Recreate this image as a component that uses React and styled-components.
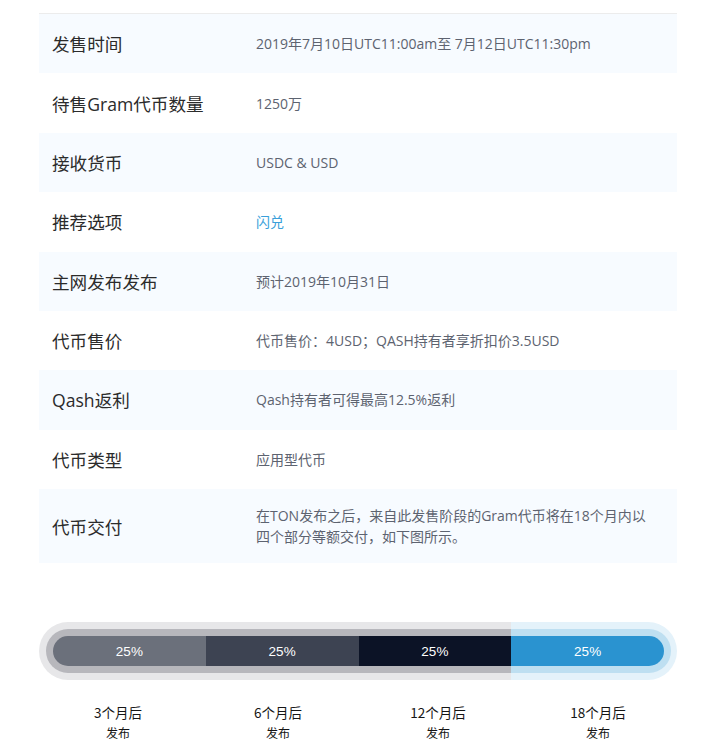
import React from "react";
import styled, { createGlobalStyle } from "styled-components";

const Global = createGlobalStyle`
  * { box-sizing: border-box; }
  body {
    margin: 0;
    background: #ffffff;
    font-family: "Open Sans", "Noto Sans CJK SC", sans-serif;
  }
`;

const Page = styled.div`
  padding: 13px 30px 0 39px;
`;

const Table = styled.div`
  border-top: 1px solid #ececec;
  display: flex;
  flex-direction: column;
`;

const Row = styled.div`
  display: grid;
  grid-template-columns: 217px 1fr;
  align-items: center;
  min-height: 59.375px;
  padding: ${(p) => (p.$tall ? "16px 0" : "0")};
  background: ${(p) => (p.$shade ? "#f7fbff" : "#ffffff")};
`;

const Label = styled.div`
  padding-left: 13px;
  font-size: 17.6px;
  color: #2b2b2b;
`;

const Value = styled.div`
  padding-right: 26px;
  font-size: 14px;
  line-height: 21px;
  color: ${(p) => (p.$link ? "#3a9fda" : "#5d6370")};
`;

const Schedule = styled.div`
  margin-top: 59px;
`;

const Track = styled.div`
  display: flex;
`;

const Stage = styled.div`
  flex: 1 1 ${(p) => (p.$first ? "14px" : p.$last ? "13px" : "0px")};
  padding: 7px ${(p) => (p.$last ? "6px" : "0")} 7px ${(p) => (p.$first ? "7px" : "0")};
  background: ${(p) => (p.$blue ? "#e4f2fa" : "#e7e7e9")};
  border-radius: ${(p) => (p.$first ? "30px 0 0 30px" : p.$last ? "0 30px 30px 0" : "0")};
`;

const Ring = styled.div`
  padding: 7px ${(p) => (p.$last ? "7px" : "0")} 7px ${(p) => (p.$first ? "7px" : "0")};
  background: ${(p) => (p.$blue ? "#bedff1" : "#b7b7bc")};
  border-radius: ${(p) => (p.$first ? "23px 0 0 23px" : p.$last ? "0 23px 23px 0" : "0")};
`;

const Segment = styled.div`
  height: 30px;
  display: flex;
  align-items: center;
  justify-content: center;
  background: ${(p) => p.$color};
  color: #ffffff;
  font-family: "Liberation Sans", Arial, sans-serif;
  font-size: 13.5px;
  border-radius: ${(p) => (p.$first ? "15px 0 0 15px" : p.$last ? "0 15px 15px 0" : "0")};
`;

const Captions = styled.div`
  display: grid;
  grid-template-columns: repeat(4, 1fr);
  margin-top: 21px;
  margin-right: -1px;
  margin-left: -1px;
`;

const Caption = styled.div`
  text-align: center;
  color: #151515;
  font-family: "Noto Sans CJK SC", sans-serif;
`;

const CaptionMain = styled.div`
  font-size: 13.5px;
  line-height: 22px;
`;

const CaptionSub = styled.div`
  font-size: 12px;
  line-height: 20px;
`;

const rows = [
  { label: "发售时间", value: "2019年7月10日UTC11:00am至 7月12日UTC11:30pm" },
  { label: "待售Gram代币数量", value: "1250万" },
  { label: "接收货币", value: "USDC & USD" },
  { label: "推荐选项", value: "闪兑", link: true },
  { label: "主网发布发布", value: "预计2019年10月31日" },
  { label: "代币售价", value: "代币售价：4USD；QASH持有者享折扣价3.5USD" },
  { label: "Qash返利", value: "Qash持有者可得最高12.5%返利" },
  { label: "代币类型", value: "应用型代币" },
  {
    label: "代币交付",
    value: "在TON发布之后，来自此发售阶段的Gram代币将在18个月内以四个部分等额交付，如下图所示。",
    tall: true,
  },
];

const stages = [
  { color: "#6b707b", when: "3个月后" },
  { color: "#3d4352", when: "6个月后" },
  { color: "#0c1326", when: "12个月后" },
  { color: "#2a93d0", when: "18个月后", blue: true },
];

export default function App() {
  return (
    <>
      <Global />
      <Page>
        <Table>
          {rows.map((r, i) => (
            <Row key={r.label} $shade={i % 2 === 0} $tall={r.tall}>
              <Label>{r.label}</Label>
              <Value $link={r.link}>{r.value}</Value>
            </Row>
          ))}
        </Table>
        <Schedule>
          <Track>
            {stages.map((s, i) => {
              const first = i === 0;
              const last = i === stages.length - 1;
              return (
                <Stage key={s.when} $first={first} $last={last} $blue={s.blue}>
                  <Ring $first={first} $last={last} $blue={s.blue}>
                    <Segment $first={first} $last={last} $color={s.color}>
                      25%
                    </Segment>
                  </Ring>
                </Stage>
              );
            })}
          </Track>
          <Captions>
            {stages.map((s) => (
              <Caption key={s.when}>
                <CaptionMain>{s.when}</CaptionMain>
                <CaptionSub>发布</CaptionSub>
              </Caption>
            ))}
          </Captions>
        </Schedule>
      </Page>
    </>
  );
}
